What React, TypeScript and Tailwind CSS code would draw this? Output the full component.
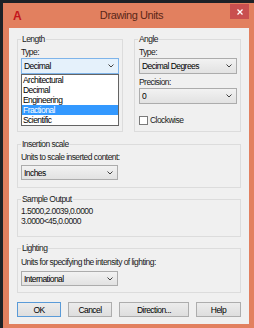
import React from "react";

const font = { fontFamily: '"Liberation Sans", Arial, sans-serif' };

function Chevron() {
  return (
    <svg width="6" height="4" viewBox="0 0 6 4" className="shrink-0">
      <polyline points="0.5,0.5 3,3 5.5,0.5" fill="none" stroke="#404040" strokeWidth="1" />
    </svg>
  );
}

function Select({ value, w, h = "h-[16px]", focused = false }: { value: string; w: string; h?: string; focused?: boolean }) {
  return (
    <div
      className={`${w} ${h} flex items-center justify-between pl-[2px] pr-[4px] border ${
        focused ? "border-[#7eb4ea] bg-[#e5f1fb]" : "border-[#acacac] bg-gradient-to-b from-[#f2f2f2] to-[#e2e2e2]"
      }`}
    >
      <span className="leading-[10px] text-black">{value}</span>
      <Chevron />
    </div>
  );
}

function Legend({ children }: { children: React.ReactNode }) {
  return <div className="-mt-[6px] ml-[3px] w-fit bg-[#f0f0f0] px-[1px] leading-[10px] h-[10px] text-[#1a1a1a]">{children}</div>;
}

function Button({ children, w, def = false }: { children: React.ReactNode; w: string; def?: boolean }) {
  return (
    <div
      className={`${w} h-[15px] flex items-center justify-center border ${
        def ? "border-[#5a9bd8]" : "border-[#adadad]"
      } bg-gradient-to-b from-[#ececec] to-[#dedede] leading-[10px] text-black`}
    >
      {children}
    </div>
  );
}

export default function App() {
  return (
    <div
      className="w-[254px] h-[328px] bg-[#1d2126] pl-[3px] pt-[3px] flex flex-col text-[8.5px] tracking-[-0.55px] text-[#1a1a1a] overflow-hidden"
      style={font}
    >
      <div className="flex-1 flex flex-col bg-[#e2805f]">
        {/* title bar */}
        <div className="h-[25px] flex items-start">
          <div className="w-[26px] h-full flex items-center pl-[10px]">
            <span className="text-[12px] font-bold leading-none text-[#c3151c] tracking-normal">A</span>
          </div>
          <div className="flex-1 h-full flex items-center justify-center text-[11px] tracking-[-0.4px] text-[#5a2617] pl-[4px]">
            Drawing Units
          </div>
          <div className="w-[19px] h-[15px] mt-[1px] mr-[5px] bg-[#c94f4f] flex items-center justify-center">
            <svg width="6" height="6" viewBox="0 0 6 6">
              <path d="M0.5 0.5L5.5 5.5M5.5 0.5L0.5 5.5" stroke="#fff" strokeWidth="1.3" />
            </svg>
          </div>
        </div>
        {/* content */}
        <div className="ml-[6px] mr-[5px] mb-[4px] flex-1 bg-[#f0f0f0] px-[8px] pt-[11px] flex flex-col">
          <div className="flex gap-[11px]">
            {/* Length */}
            <div className="w-[106px] h-[93px] border border-[#dcdcdc] flex flex-col">
              <Legend>Length</Legend>
              <div className="relative pl-[3px] pr-[3px]">
                <div className="mt-[3px] leading-[10px]">Type:</div>
                <div className="mt-[1px]">
                  <Select value="Decimal" w="w-[98px]" focused />
                </div>
                <div className="absolute left-[3px] top-[30px] w-[98px] border border-[#646464] bg-white">
                  {["Architectural", "Decimal", "Engineering", "Fractional", "Scientific"].map((t) => (
                    <div
                      key={t}
                      className={`h-[10px] leading-[10px] pl-[1px] ${t === "Fractional" ? "bg-[#3399ff] text-white" : "text-black"}`}
                    >
                      {t}
                    </div>
                  ))}
                </div>
              </div>
            </div>
            {/* Angle */}
            <div className="w-[107px] h-[93px] border border-[#dcdcdc] flex flex-col">
              <Legend>Angle</Legend>
              <div className="pl-[4px]">
                <div className="mt-[3px] leading-[10px]">Type:</div>
                <div className="mt-[1px]">
                  <Select value="Decimal Degrees" w="w-[98px]" />
                </div>
                <div className="mt-[3px] leading-[10px]">Precision:</div>
                <div className="mt-[1px]">
                  <Select value="0" w="w-[98px]" />
                </div>
                <div className="mt-[11px] flex items-center gap-[2px] leading-[10px]">
                  <div className="w-[9px] h-[9px] border border-[#7a7a7a] bg-white" />
                  <span>Clockwise</span>
                </div>
              </div>
            </div>
          </div>

          {/* Insertion scale */}
          <div className="mt-[12px] h-[44px] border border-[#dcdcdc] flex flex-col">
            <Legend>Insertion scale</Legend>
            <div className="pl-[3px]">
              <div className="mt-[3px] leading-[10px]">Units to scale inserted content:</div>
              <div className="mt-[3px]">
                <Select value="Inches" w="w-[97px]" h="h-[15px]" />
              </div>
            </div>
          </div>

          {/* Sample Output */}
          <div className="mt-[11px] h-[38px] border border-[#dcdcdc] flex flex-col">
            <Legend>Sample Output</Legend>
            <div className="pl-[3px] mt-[2px]">
              <div className="leading-[10px]">1.5000,2.0039,0.0000</div>
              <div className="leading-[10px]">3.0000&lt;45,0.0000</div>
            </div>
          </div>

          {/* Lighting */}
          <div className="mt-[11px] h-[45px] border border-[#dcdcdc] flex flex-col">
            <Legend>Lighting</Legend>
            <div className="pl-[3px]">
              <div className="mt-[4px] leading-[10px]">Units for specifying the intensity of lighting:</div>
              <div className="mt-[4px]">
                <Select value="International" w="w-[97px]" h="h-[15px]" />
              </div>
            </div>
          </div>

          {/* Buttons */}
          <div className="mt-[9px] flex gap-[7px]">
            <Button w="w-[44px]" def>
              OK
            </Button>
            <Button w="w-[44px]">Cancel</Button>
            <Button w="w-[70px]">Direction...</Button>
            <Button w="w-[45px]">Help</Button>
          </div>
        </div>
      </div>
    </div>
  );
}
